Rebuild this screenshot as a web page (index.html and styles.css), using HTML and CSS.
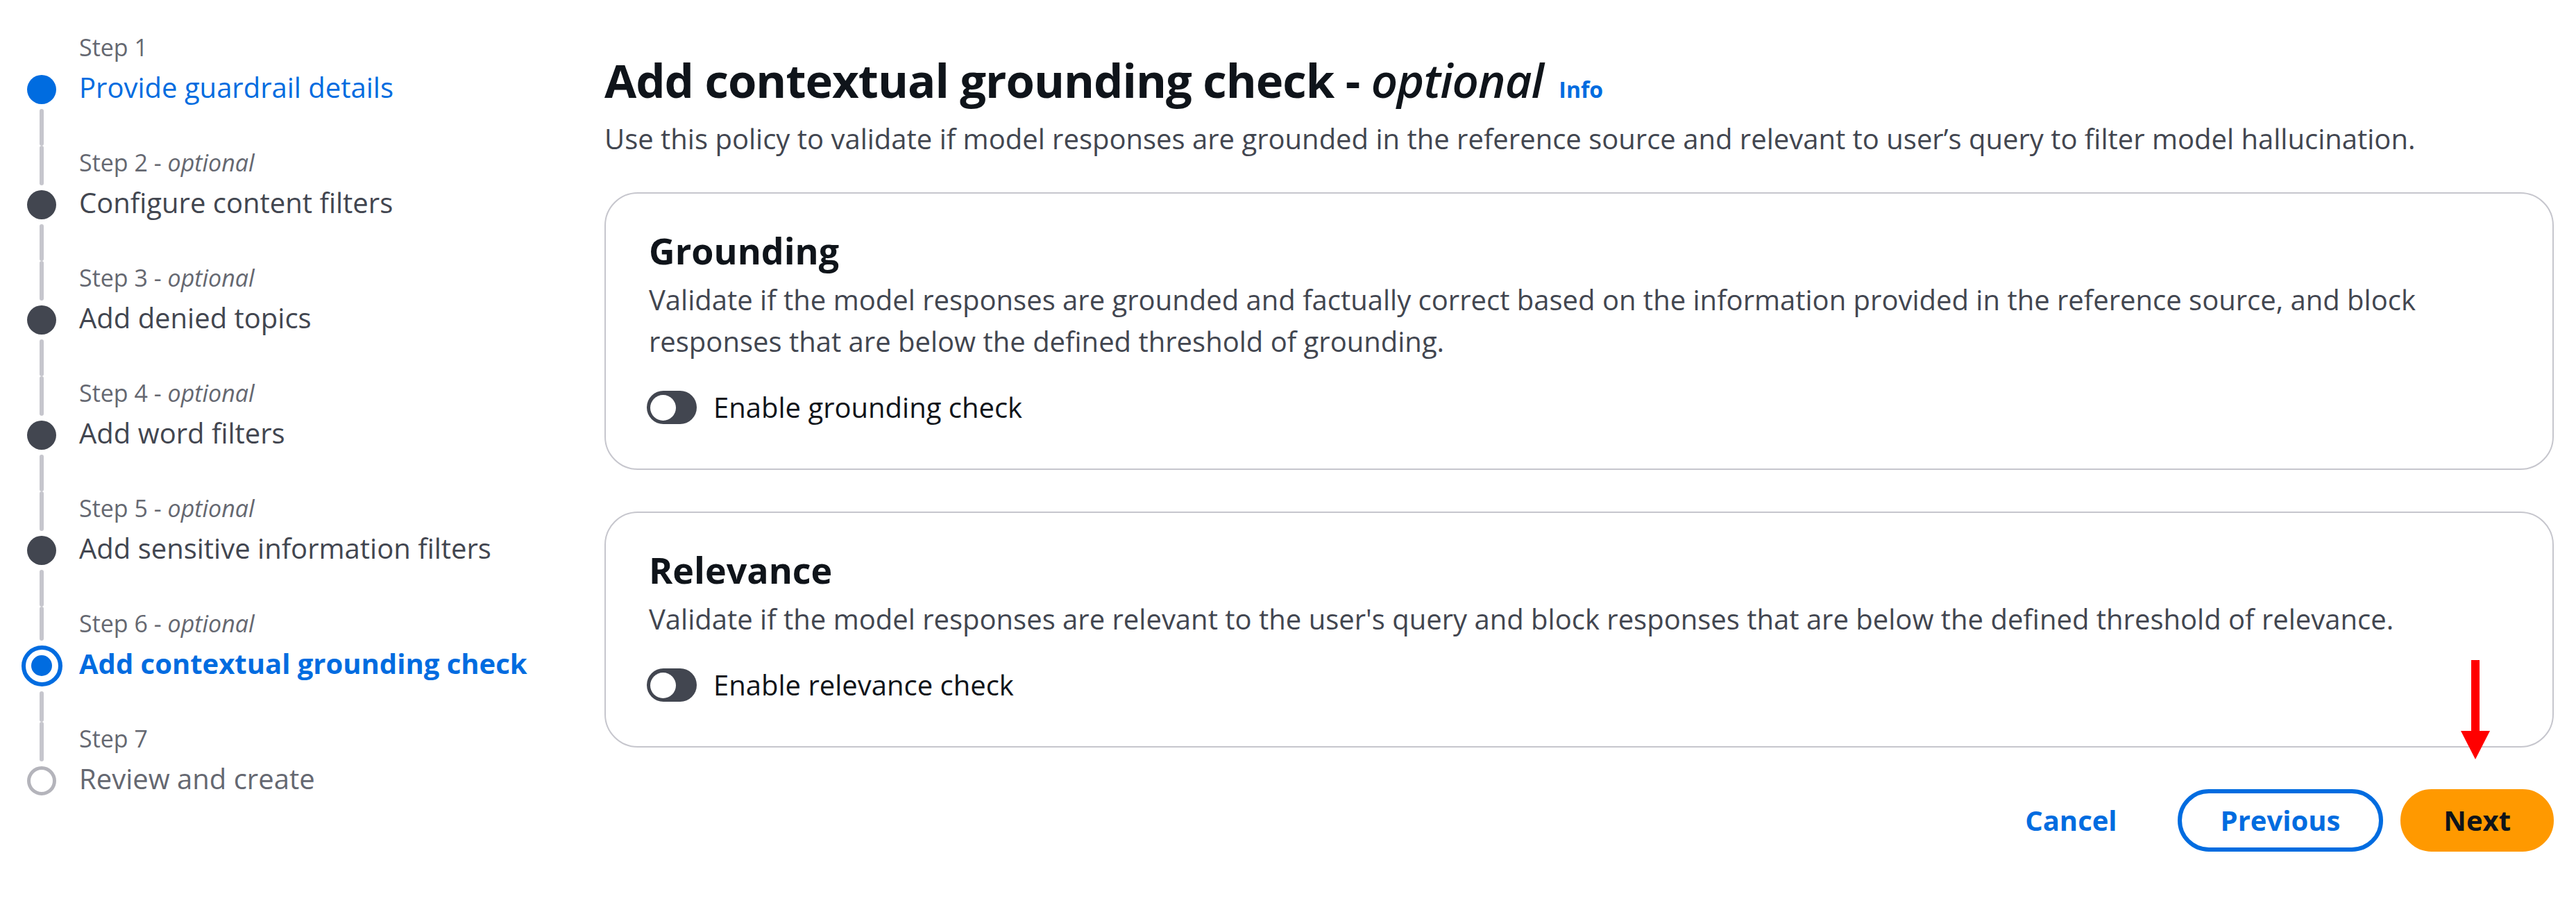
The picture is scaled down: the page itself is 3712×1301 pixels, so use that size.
FILE: index.html
```html
<!DOCTYPE html>
<html lang="en">
<head>
<meta charset="utf-8">
<title>Add contextual grounding check</title>
<link rel="stylesheet" href="styles.css">
</head>
<body>
<div class="page">
  <nav class="wizard-nav">
    <ol class="steps">
      <li class="step is-visited is-first">
        <div class="marker"><span class="seg seg-top"></span><span class="dot"></span><span class="seg seg-bottom"></span></div>
        <div class="step-text"><span class="step-label">Step 1</span><a class="step-title">Provide guardrail details</a></div>
      </li>
      <li class="step is-unvisited">
        <div class="marker"><span class="seg seg-top"></span><span class="dot"></span><span class="seg seg-bottom"></span></div>
        <div class="step-text"><span class="step-label">Step 2 - <i>optional</i></span><span class="step-title">Configure content filters</span></div>
      </li>
      <li class="step is-unvisited">
        <div class="marker"><span class="seg seg-top"></span><span class="dot"></span><span class="seg seg-bottom"></span></div>
        <div class="step-text"><span class="step-label">Step 3 - <i>optional</i></span><span class="step-title">Add denied topics</span></div>
      </li>
      <li class="step is-unvisited">
        <div class="marker"><span class="seg seg-top"></span><span class="dot"></span><span class="seg seg-bottom"></span></div>
        <div class="step-text"><span class="step-label">Step 4 - <i>optional</i></span><span class="step-title">Add word filters</span></div>
      </li>
      <li class="step is-unvisited">
        <div class="marker"><span class="seg seg-top"></span><span class="dot"></span><span class="seg seg-bottom"></span></div>
        <div class="step-text"><span class="step-label">Step 5 - <i>optional</i></span><span class="step-title">Add sensitive information filters</span></div>
      </li>
      <li class="step is-active">
        <div class="marker"><span class="seg seg-top"></span><span class="dot"></span><span class="seg seg-bottom"></span></div>
        <div class="step-text"><span class="step-label">Step 6 - <i>optional</i></span><span class="step-title">Add contextual grounding check</span></div>
      </li>
      <li class="step is-disabled is-last">
        <div class="marker"><span class="seg seg-top"></span><span class="dot"></span><span class="seg seg-bottom"></span></div>
        <div class="step-text"><span class="step-label">Step 7</span><span class="step-title">Review and create</span></div>
      </li>
    </ol>
  </nav>

  <main class="content">
    <header class="page-header">
      <h1 class="page-title">Add contextual grounding check - <i class="optional">optional</i> <a class="info-link">Info</a></h1>
      <p class="page-desc">Use this policy to validate if model responses are grounded in the reference source and relevant to user’s query to filter model hallucination.</p>
    </header>

    <section class="card">
      <h2 class="card-title">Grounding</h2>
      <p class="card-desc">Validate if the model responses are grounded and factually correct based on the information provided in the reference source, and block responses that are below the defined threshold of grounding.</p>
      <label class="toggle-row"><span class="toggle"><span class="knob"></span></span><span class="toggle-label">Enable grounding check</span></label>
    </section>

    <section class="card">
      <h2 class="card-title">Relevance</h2>
      <p class="card-desc">Validate if the model responses are relevant to the user's query and block responses that are below the defined threshold of relevance.</p>
      <label class="toggle-row"><span class="toggle"><span class="knob"></span></span><span class="toggle-label">Enable relevance check</span></label>
    </section>

    <div class="actions">
      <button class="btn btn-link">Cancel</button>
      <button class="btn btn-normal">Previous</button>
      <button class="btn btn-primary">Next
        <svg class="annotation-arrow" width="42" height="143" viewBox="0 0 42 143" aria-hidden="true">
          <rect x="15" y="0" width="12" height="103" fill="#ff0000"/>
          <polygon points="0,102 42,102 21,143" fill="#ff0000"/>
        </svg>
      </button>
    </div>
  </main>
</div>
</body>
</html>
```

FILE: styles.css
```css
* { box-sizing: border-box; }

html, body {
  margin: 0;
  padding: 0;
  background: #ffffff;
}

body {
  font-family: "Open Sans", "Noto Sans", sans-serif;
  color: #0f141a;
  font-size: 40px;
  line-height: 60px;
}

.page {
  display: grid;
  grid-template-columns: 871px 1fr;
  padding-right: 32px;
  min-height: 1301px;
}

/* ---------- Wizard navigation ---------- */
.wizard-nav {
  padding: 44px 0 0 24px;
}

.steps {
  list-style: none;
  margin: 0;
  padding: 0;
}

.step {
  display: grid;
  grid-template-columns: 72px 1fr;
  column-gap: 18px;
}

.marker {
  display: flex;
  flex-direction: column;
  align-items: center;
}

.seg {
  width: 6px;
  background: #c6c6cd;
  border-radius: 3px;
}

.seg-top {
  height: 57px;
  margin-bottom: 7px;
  flex: none;
}

.seg-bottom {
  flex: 1;
  margin-top: 7px;
}

.is-first .seg-top,
.is-last .seg-bottom {
  visibility: hidden;
}

.dot {
  width: 42px;
  height: 42px;
  border-radius: 50%;
  flex: none;
  background: #424650;
}

.is-visited .dot { background: #006ce0; }

.is-active .dot {
  width: 59px;
  height: 59px;
  margin: -8.5px 0;
  background: #ffffff;
  border: 6px solid #006ce0;
  display: flex;
  align-items: center;
  justify-content: center;
}

.is-active .dot::after {
  content: "";
  width: 30px;
  height: 30px;
  border-radius: 50%;
  background: #006ce0;
}

.is-active .seg-top { margin-bottom: 15.5px; height: 48.5px; }
.is-active .seg-bottom { margin-top: 15.5px; }

.is-disabled .dot {
  background: #ffffff;
  border: 5px solid #b4b4bb;
}

.step-text {
  display: flex;
  flex-direction: column;
  padding-bottom: 54px;
}

.is-last .step-text { padding-bottom: 0; }

.step-label {
  font-size: 34px;
  line-height: 48px;
  color: #656871;
  margin-bottom: 4px;
}

.step-title {
  font-size: 40px;
  line-height: 60px;
  color: #424650;
  text-decoration: none;
  white-space: nowrap;
}

.is-visited .step-title { color: #006ce0; }
.is-active .step-title { color: #006ce0; font-weight: 700; }
.is-disabled .step-title { color: #656871; }

/* ---------- Content ---------- */
.content {
  padding-top: 70px;
  display: flex;
  flex-direction: column;
}

.page-header { margin-bottom: 47px; }

.page-title {
  margin: 0;
  font-size: 67px;
  line-height: 90px;
  font-weight: 700;
  letter-spacing: -1px;
  color: #0f141a;
}

.optional {
  font-weight: 600;
}

.info-link {
  font-size: 32px;
  line-height: 1;
  font-weight: 700;
  letter-spacing: 0;
  color: #006ce0;
  margin-left: 6px;
}

.page-desc {
  margin: 10px 0 0;
  color: #424650;
}

.card {
  border: 2px solid #c6c6cd;
  border-radius: 48px;
  padding: 49px 62px 58px;
  margin-bottom: 60px;
}

.card-title {
  margin: 0 0 8px;
  font-size: 52px;
  line-height: 66px;
  font-weight: 700;
  color: #0f141a;
}

.card-desc {
  margin: 0;
  color: #424650;
}

.toggle-row {
  margin-top: 35px;
  display: flex;
  align-items: center;
  gap: 24px;
}

.toggle {
  width: 72px;
  height: 48px;
  border-radius: 24px;
  background: #424650;
  display: flex;
  align-items: center;
  padding-left: 5px;
  margin-left: -3px;
}

.knob {
  width: 37px;
  height: 37px;
  border-radius: 50%;
  background: #ffffff;
}

.toggle-label { color: #0f141a; }

/* ---------- Actions ---------- */
.actions {
  display: flex;
  justify-content: flex-end;
  gap: 25px;
}

.btn {
  font-family: inherit;
  font-size: 40px;
  font-weight: 700;
  line-height: 78px;
  height: 90px;
  padding: 0 56px;
  border-radius: 45px;
  border: 6px solid transparent;
  background: transparent;
  color: #006ce0;
  cursor: pointer;
}

.btn-normal {
  border-color: #006ce0;
  background: #ffffff;
}

.btn-primary {
  position: relative;
  background: #ff9900;
  border-color: #ff9900;
  color: #0f141a;
}

.annotation-arrow {
  position: absolute;
  left: 50%;
  bottom: 100%;
  margin-left: -24px;
  margin-bottom: 49px;
}
```
